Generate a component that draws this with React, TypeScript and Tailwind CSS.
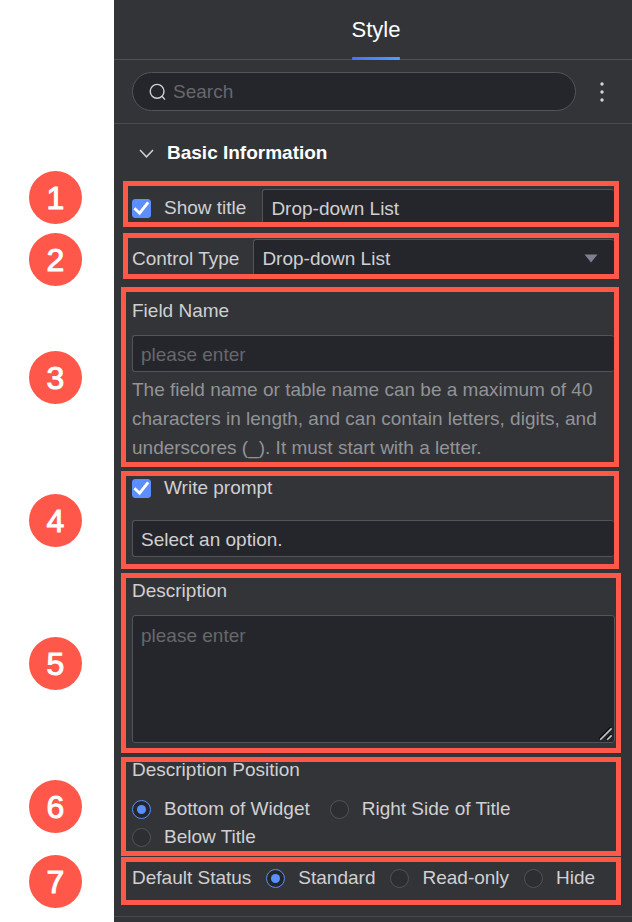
import { useState } from 'react';
import type { ReactNode } from 'react';

const field =
  'block w-full rounded-[3px] border border-[#535459] bg-[#25262b] px-2 text-[#d0d0d2] outline-none placeholder:text-[#67686b]';

function Marker({ n, className }: { n: number; className: string }) {
  return (
    <li
      className={`flex h-[53px] w-[53px] items-center justify-center rounded-full bg-[#ff584a] text-[32px] leading-none text-white [-webkit-text-stroke:1px_white] ${className}`}
    >
      {n}
    </li>
  );
}

function Frame({ children, className }: { children: ReactNode; className: string }) {
  return (
    <section className={`overflow-hidden border-5 border-[#fe5849] ${className}`}>{children}</section>
  );
}

function Check({ label }: { label: string }) {
  const [on, setOn] = useState(true);
  return (
    <label className="flex shrink-0 items-center gap-[13px]">
      <span className="grid h-[19px] w-[19px]">
        <input
          type="checkbox"
          checked={on}
          onChange={() => setOn(!on)}
          className="col-start-1 row-start-1 m-0 h-[19px] w-[19px] appearance-none rounded-[3px] border border-[#535459] bg-[#25262b] checked:border-[#5b8ff9] checked:bg-[#5b8fff]"
        />
        {on && (
          <svg viewBox="0 0 19 19" className="pointer-events-none col-start-1 row-start-1 h-[19px] w-[19px]">
            <path d="M2.4 9.2 L7.6 14.2 L16.2 3.4" fill="none" stroke="#fff" strokeWidth="2.9" />
          </svg>
        )}
      </span>
      {label}
    </label>
  );
}

function Radio({ label, name, checked = false }: { label: string; name: string; checked?: boolean }) {
  return (
    <label className="flex items-center gap-[13px]">
      <input
        type="radio"
        name={name}
        defaultChecked={checked}
        className="m-0 grid h-[19px] w-[19px] shrink-0 appearance-none place-content-center rounded-full border border-[#515257] bg-[#2d2e32] before:h-[9px] before:w-[9px] before:rounded-full checked:border-[#5b8ff9] checked:bg-[#25262b] checked:before:bg-[#5b8fff]"
      />
      {label}
    </label>
  );
}

export default function App() {
  return (
    <div className="flex min-h-screen bg-white font-['Helvetica_Neue','Liberation_Sans',Arial,sans-serif] text-[19px]">
      <ol className="flex w-[114px] shrink-0 flex-col pl-[29px]">
        <Marker n={1} className="mt-[171px]" />
        <Marker n={2} className="mt-[9px]" />
        <Marker n={3} className="mt-[65px]" />
        <Marker n={4} className="mt-[90px]" />
        <Marker n={5} className="mt-[90px]" />
        <Marker n={6} className="mt-[90px]" />
        <Marker n={7} className="mt-[22px]" />
      </ol>

      <main className="min-w-0 flex-1 bg-[#333438] text-[#d0d0d2]">
        <header className="flex h-[60px] justify-center border-b border-[#505155] pl-[6px]">
          <button className="-mb-px flex flex-col items-center justify-between pt-[14px] text-[22px] leading-8 text-white">
            Style
            <span className="h-[3px] w-full rounded-[1px] bg-linear-to-r from-[#4a70ff] to-[#4a9eff]" />
          </button>
        </header>

        <div className="flex h-16 items-center border-b border-[#4b4c50] pl-[18px]">
          <label className="flex h-[39px] flex-1 items-center gap-[6px] rounded-full border border-[#535459] bg-[#25262b] px-4">
            <svg viewBox="0 0 18 18" className="h-[18px] w-[18px] shrink-0" fill="none" stroke="#d0d0d2" strokeWidth="1.4">
              <circle cx="8.1" cy="8.3" r="6.9" />
              <path d="M12.8 13 L16 16.6" />
            </svg>
            <input
              type="search"
              aria-label="Search"
              placeholder="Search"
              className="min-w-0 flex-1 bg-transparent pt-[2px] outline-none placeholder:text-[#67686b]"
            />
          </label>
          <button aria-label="More options" className="flex w-14 justify-center pr-1">
            <svg viewBox="0 0 4 20" className="h-5 w-1" fill="#d4d4d6">
              <circle cx="2" cy="2" r="1.7" />
              <circle cx="2" cy="10" r="1.7" />
              <circle cx="2" cy="18" r="1.7" />
            </svg>
          </button>
        </div>

        <h2>
          <button className="flex h-[57px] items-center gap-[13px] pt-[2px] pl-[25px] text-[19px] font-bold text-white">
            <svg viewBox="0 0 15 10" className="h-[10px] w-[15px]" fill="none" stroke="#d0d0d2" strokeWidth="1.5">
              <path d="M1 1 L7.5 7.8 L14 1" />
            </svg>
            Basic Information
          </button>
        </h2>

        <Frame className="mr-[13px] ml-[9px] flex h-[46px] items-start gap-4 pt-[3px] pl-1">
          <div className="flex h-[38px] items-center">
            <Check label="Show title" />
          </div>
          <input
            aria-label="Title"
            defaultValue="Drop-down List"
            className={`${field} h-[38px] min-w-0 flex-1 border-r-0 pt-[2px]`}
          />
        </Frame>

        <Frame className="mt-[6px] mr-[13px] ml-[9px] flex h-[46px] items-start gap-[14px] pt-px pl-1">
          <label htmlFor="control-type" className="shrink-0 leading-10">
            Control Type
          </label>
          <div className="grid min-w-0 flex-1 items-center">
            <select
              id="control-type"
              className={`${field} col-start-1 row-start-1 h-[38px] appearance-none border-r-0 pt-[2px]`}
            >
              <option>Drop-down List</option>
            </select>
            <svg viewBox="0 0 14 9" className="pointer-events-none col-start-1 row-start-1 mr-4 h-[9px] w-[14px] justify-self-end">
              <path d="M0.5 0.5 H13.5 L7 8.5 Z" fill="#7d8090" />
            </svg>
          </div>
        </Frame>

        <Frame className="mt-2 mr-[13px] ml-[7px] pt-[5px] pl-[6px]">
          <label htmlFor="field-name" className="block leading-7">
            Field Name
          </label>
          <input
            id="field-name"
            placeholder="please enter"
            className={`${field} mt-[10px] h-[37px] border-r-0 pt-[2px]`}
          />
          <p className="mt-[3px] leading-[29px] text-[#929396]">
            The field name or table name can be a maximum of 40 characters in length, and can contain letters,
            digits, and underscores (_). It must start with a letter.
          </p>
        </Frame>

        <Frame className="mt-1 mr-[13px] ml-[7px] pb-[7px] pl-[6px]">
          <div className="leading-6">
            <Check label="Write prompt" />
          </div>
          <input
            aria-label="Prompt"
            defaultValue="Select an option."
            className={`${field} mt-5 h-[37px] border-r-0 pt-[2px]`}
          />
        </Frame>

        <Frame className="mt-1 mr-[11px] ml-[7px] pt-px pr-px pb-[5px] pl-[6px]">
          <label htmlFor="description" className="block leading-6">
            Description
          </label>
          <div className="mt-3 grid">
            <textarea
              id="description"
              placeholder="please enter"
              className={`${field} col-start-1 row-start-1 h-32 resize-none py-[6px] leading-7`}
            />
            <svg
              viewBox="0 0 14 14"
              className="pointer-events-none col-start-1 row-start-1 mr-[2px] mb-[2px] h-[14px] w-[14px] self-end justify-self-end"
              strokeWidth="1.6"
            >
              <path d="M0 12 L12 0 M7 12 L12 7" stroke="#0c0c0e" />
              <path d="M1.2 12.8 L12.6 1.4 M8.2 12.8 L12.6 8.4" stroke="#c4c4c6" />
            </svg>
          </div>
        </Frame>

        <Frame className="mt-1 mr-[11px] ml-[7px] pl-[6px]">
          <fieldset>
            <legend className="leading-4">Description Position</legend>
            <div className="mt-[17px] flex flex-wrap gap-x-5 leading-7">
              <Radio name="position" label="Bottom of Widget" checked />
              <Radio name="position" label="Right Side of Title" />
              <Radio name="position" label="Below Title" />
            </div>
          </fieldset>
        </Frame>

        <Frame className="mt-px mr-[11px] ml-[7px] pb-[5px] pl-[6px]">
          <div role="radiogroup" aria-labelledby="status" className="flex h-[33px] items-center gap-[15px]">
            <span id="status">Default Status</span>
            <Radio name="status" label="Standard" checked />
            <Radio name="status" label="Read-only" />
            <Radio name="status" label="Hide" />
          </div>
        </Frame>

        <hr className="mt-[11px] border-[#48494d]" />
      </main>
    </div>
  );
}
